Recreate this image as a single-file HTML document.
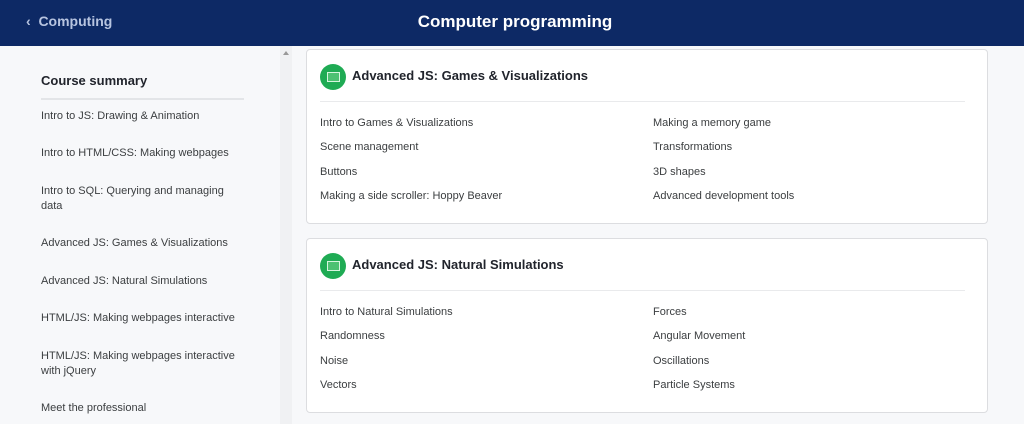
<!DOCTYPE html><html><head><style>
body{margin:0;width:1024px;height:424px;overflow:hidden;background:#f7f8fa;font-family:"Liberation Sans",sans-serif;position:relative}
.hd{position:absolute;left:0;top:0;width:1024px;height:46px;background:#0d2965}
.back{position:absolute;left:26px;top:13px;color:#b7c4e0;font-size:14px;font-weight:bold}
.title{position:absolute;left:0;width:1030px;text-align:center;top:12px;color:#fff;font-size:17px;font-weight:bold}
.side{position:absolute;left:41px;top:73px;width:203px}
.side h3{margin:0;font-size:13px;color:#21242c;padding-bottom:10px;border-bottom:2px solid #e3e5e8;font-weight:bold}
.si{position:absolute;left:41px;font-size:11px;color:#3b3e40;line-height:15px;width:200px}
.sb{position:absolute;left:280px;top:46px;width:12px;height:378px;background:#f0f1f3}
.card{position:absolute;left:306px;width:680px;background:#fff;border:1px solid #dcdde0;border-radius:4px}
.ic{position:absolute;left:13px;top:14px;width:26px;height:26px;border-radius:50%;background:#1fab54}
.ic:after{content:"";position:absolute;left:7px;top:8px;width:11px;height:8px;border:1px solid #d6f5df;background:#4cc172}
.ct{position:absolute;left:45px;top:18px;font-size:13px;font-weight:bold;color:#21242c}
.ln{position:absolute;left:13px;right:22px;top:51px;border-top:1px solid #e9eaec}
.it{position:absolute;font-size:11px;color:#3b3e40}
</style></head><body>
<div class="hd"><div class="back">‹&nbsp; Computing</div><div class="title">Computer programming</div></div>
<div class="side"><h3>Course summary</h3></div>
<div class="si" style="top:109px">Intro to JS: Drawing &amp; Animation</div>
<div class="si" style="top:146px">Intro to HTML/CSS: Making webpages</div>
<div class="si" style="top:184px">Intro to SQL: Querying and managing data</div>
<div class="si" style="top:236px">Advanced JS: Games &amp; Visualizations</div>
<div class="si" style="top:274px">Advanced JS: Natural Simulations</div>
<div class="si" style="top:311px">HTML/JS: Making webpages interactive</div>
<div class="si" style="top:349px">HTML/JS: Making webpages interactive with jQuery</div>
<div class="si" style="top:401px">Meet the professional</div>
<div class="sb"><div style="position:absolute;left:3px;top:5px;border:3px solid transparent;border-bottom:4px solid #999;border-top:0"></div></div>
<div class="card" style="top:49px;height:173px"><div class="ic"></div><div class="ct">Advanced JS: Games &amp; Visualizations</div><div class="ln"></div>
<div class="it" style="left:13px;top:67px">Intro to Games &amp; Visualizations</div><div class="it" style="left:346px;top:67px">Making a memory game</div>
<div class="it" style="left:13px;top:91px">Scene management</div><div class="it" style="left:346px;top:91px">Transformations</div>
<div class="it" style="left:13px;top:116px">Buttons</div><div class="it" style="left:346px;top:116px">3D shapes</div>
<div class="it" style="left:13px;top:140px">Making a side scroller: Hoppy Beaver</div><div class="it" style="left:346px;top:140px">Advanced development tools</div></div>
<div class="card" style="top:238px;height:173px"><div class="ic"></div><div class="ct">Advanced JS: Natural Simulations</div><div class="ln"></div>
<div class="it" style="left:13px;top:67px">Intro to Natural Simulations</div><div class="it" style="left:346px;top:67px">Forces</div>
<div class="it" style="left:13px;top:91px">Randomness</div><div class="it" style="left:346px;top:91px">Angular Movement</div>
<div class="it" style="left:13px;top:116px">Noise</div><div class="it" style="left:346px;top:116px">Oscillations</div>
<div class="it" style="left:13px;top:140px">Vectors</div><div class="it" style="left:346px;top:140px">Particle Systems</div></div>
</body></html>
